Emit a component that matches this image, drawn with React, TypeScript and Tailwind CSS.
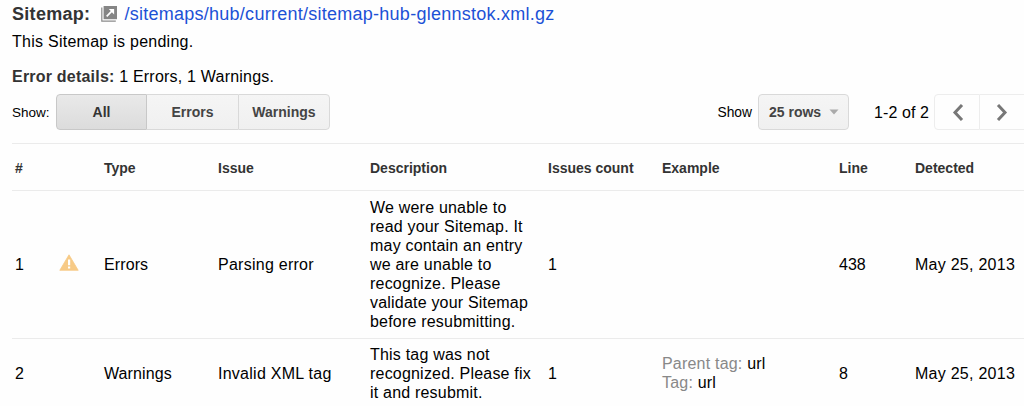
import React from "react";

type Issue = {
  id: number;
  severe: boolean;
  type: string;
  issue: string;
  description: string[];
  count: number;
  example: { label: string; value: string }[];
  line: number;
  detected: string;
};

const issues: Issue[] = [
  {
    id: 1,
    severe: true,
    type: "Errors",
    issue: "Parsing error",
    description: [
      "We were unable to",
      "read your Sitemap. It",
      "may contain an entry",
      "we are unable to",
      "recognize. Please",
      "validate your Sitemap",
      "before resubmitting.",
    ],
    count: 1,
    example: [],
    line: 438,
    detected: "May 25, 2013",
  },
  {
    id: 2,
    severe: false,
    type: "Warnings",
    issue: "Invalid XML tag",
    description: ["This tag was not", "recognized. Please fix", "it and resubmit."],
    count: 1,
    example: [
      { label: "Parent tag:", value: "url" },
      { label: "Tag:", value: "url" },
    ],
    line: 8,
    detected: "May 25, 2013",
  },
];

const columns =
  "ml-3 grid grid-cols-[47px_45px_114px_152px_178px_114px_177px_76px_109px] items-center whitespace-nowrap";

function OpenIcon() {
  return (
    <svg className="ml-[11px] h-4 w-4 shrink-0" viewBox="0 0 16 16" fill="none">
      <path d="M.8 1.5v13.7h14" stroke="#8b8b8b" strokeWidth="1.2" />
      <path d="M2.6 0H16v13.2H2.6z" fill="#858585" />
      <path d="M5.7 10.3l5.6-5.6" stroke="#fff" strokeWidth="1.7" />
      <path d="M7.8 3h5.3v5.4z" fill="#fff" />
    </svg>
  );
}

function WarningIcon() {
  return (
    <svg className="mb-1 h-[17px] w-5" viewBox="0 0 20 17">
      <path d="M10 .8L19.2 16.3H.8z" fill="#f7ca86" stroke="#f7ca86" strokeWidth=".8" strokeLinejoin="round" />
      <path d="M9 5.5h2.2v5.7H9zM9 12.4h2.2v2H9z" fill="#fff" />
    </svg>
  );
}

export default function App() {
  return (
    <main className="h-[406px] w-[1024px] overflow-hidden bg-[#fefefe] font-['Liberation_Sans',Arial,sans-serif] text-base leading-[19px] text-black">
      <h1 className="flex h-7 items-center pl-3 text-lg">
        <b className="tracking-[0.3px] text-[#333]">Sitemap:</b>
        <OpenIcon />
        <a className="ml-[7px] tracking-[0.26px] text-[#1c51d6]">/sitemaps/hub/current/sitemap-hub-glennstok.xml.gz</a>
      </h1>
      <p className="flex h-[27px] items-center pl-3 tracking-[0.26px]">This Sitemap is pending.</p>
      <p className="mt-2 flex h-[27px] items-center whitespace-pre pl-3 tracking-[0.21px]">
        <b className="text-[#333]">Error details:</b> 1 Errors, 1 Warnings.
      </p>

      <div className="mt-1 flex h-9 items-center">
        <span className="w-11 pl-3 text-[13.5px]">Show:</span>
        <div className="ml-3 flex h-9 text-sm font-bold text-[#444]">
          <button className="w-[91px] rounded-l-sm border border-[#c8c8c8] bg-linear-to-b from-[#e9e9e9] to-[#dcdcdc] text-[#333]">All</button>
          <button className="w-[91px] border-y border-[#d9d9d9] bg-linear-to-b from-[#f5f5f5] to-[#f0f0f0]">Errors</button>
          <button className="w-[92px] rounded-r-sm border border-[#d9d9d9] bg-linear-to-b from-[#f5f5f5] to-[#f0f0f0]">Warnings</button>
        </div>
        <span className="ml-auto text-[13.8px]">Show</span>
        <button className="ml-1.5 flex h-9 w-[91px] shrink-0 items-center rounded-sm border border-[#d9d9d9] bg-linear-to-b from-[#f5f5f5] to-[#f0f0f0] pl-2.5 text-sm font-bold text-[#444]">
          25 rows
          <svg className="ml-2 h-1.5 w-2.5" viewBox="0 0 10 6">
            <path d="M.5 .5h9L5 5.5z" fill="#aaa" />
          </svg>
        </button>
        <span className="ml-[25px] w-[60px] whitespace-nowrap tracking-[0.1px]">1-2 of 2</span>
        <button className="flex h-9 w-[46px] shrink-0 items-center justify-center rounded-l-sm border border-[#ededed] pl-0.5">
          <svg className="h-[17px] w-3" viewBox="0 0 12 17" fill="none">
            <path d="M10 1L3 8.5l7 7.5" stroke="#777" strokeWidth="3" />
          </svg>
        </button>
        <button className="flex h-9 w-11 shrink-0 items-center justify-center border-y border-[#ededed]">
          <svg className="h-[17px] w-3" viewBox="0 0 12 17" fill="none">
            <path d="M2 1l7 7.5L2 16" stroke="#777" strokeWidth="3" />
          </svg>
        </button>
      </div>

      <section className="mt-[13px]">
        <div className={`${columns} h-12 border-y border-[#ebebeb] pt-0.5 text-sm font-bold text-[#333]`}>
          <span className="pl-[3px]">#</span>
          <span />
          <span>Type</span>
          <span>Issue</span>
          <span>Description</span>
          <span>Issues count</span>
          <span>Example</span>
          <span>Line</span>
          <span>Detected</span>
        </div>
        {issues.map((item) => (
          <div key={item.id} className={`${columns} border-b border-[#ebebeb] pt-[7px] pb-[7px] tracking-[0.26px] last:pt-1.5`}>
            <span className="pl-[3px]">{item.id}</span>
            <span>{item.severe && <WarningIcon />}</span>
            <span className="tracking-[0.1px]">{item.type}</span>
            <span>{item.issue}</span>
            <div className="tracking-[0.2px]">
              {item.description.map((text) => (
                <p key={text}>{text}</p>
              ))}
            </div>
            <span>{item.count}</span>
            <div className="pb-0.5 tracking-[0.2px]">
              {item.example.map((entry) => (
                <p key={entry.label}>
                  <span className="text-[#888]">{entry.label}</span> {entry.value}
                </p>
              ))}
            </div>
            <span className="tracking-normal">{item.line}</span>
            <span>{item.detected}</span>
          </div>
        ))}
      </section>
    </main>
  );
}
